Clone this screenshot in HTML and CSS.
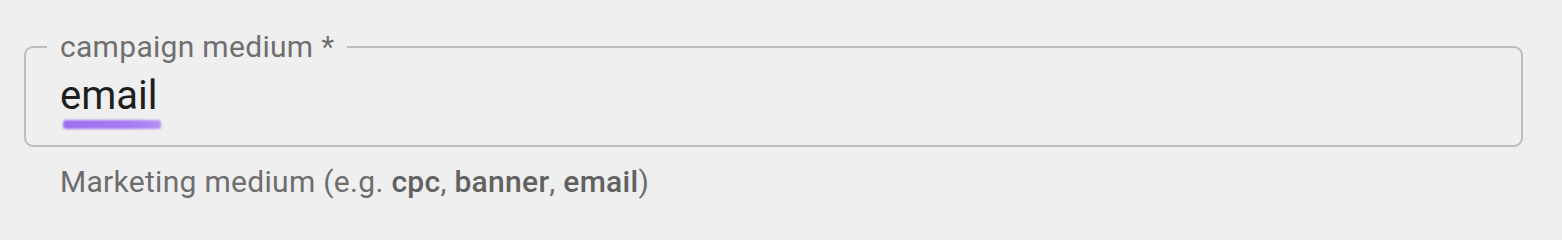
FILE: index.html
```html
<!DOCTYPE html>
<html lang="en">
<head>
<meta charset="utf-8">
<title>campaign medium</title>
<link rel="stylesheet" href="styles.css">
</head>
<body>
  <div class="field">
    <fieldset class="outline">
      <legend class="label">campaign medium *</legend>
      <div class="value">
        <span class="word">email</span>
        <span class="mark"></span>
      </div>
    </fieldset>
    <p class="helper">Marketing medium (e.g. <b>cpc</b>, <b>banner</b>, <b>email</b>)</p>
  </div>
</body>
</html>
```

FILE: styles.css
```css
html, body {
  margin: 0;
  padding: 0;
  background: #efefef;
}

body {
  font-family: Roboto, "Liberation Sans", sans-serif;
}

.field {
  padding: 32px 39px 0 24px;
}

.outline {
  margin: 0;
  padding: 0 0 16px 0;
  border: 2px solid #bdbdbd;
  border-radius: 9px;
  min-width: 0;
}

.label {
  margin-left: 21px;
  padding: 0 13px;
  font-size: 30px;
  line-height: 30px;
  letter-spacing: 0.3px;
  color: #6f6f6f;
}

.value {
  display: inline-flex;
  flex-direction: column;
  padding: 10px 0 0 34px;
}

.word {
  font-size: 40px;
  line-height: 48px;
  color: #1e1e1e;
}

.mark {
  display: block;
  width: 98px;
  height: 9px;
  margin: 0 0 0 3px;
  border-radius: 3px;
  background: linear-gradient(90deg, #9c6ff0, #a67cf2 70%, #b592f3);
  filter: blur(0.9px);
}

.helper {
  margin: 17px 0 0 36px;
  font-size: 30px;
  line-height: 36px;
  letter-spacing: 0.3px;
  color: #6d6d6d;
}

.helper b {
  font-weight: 500;
  color: #616161;
}
```
